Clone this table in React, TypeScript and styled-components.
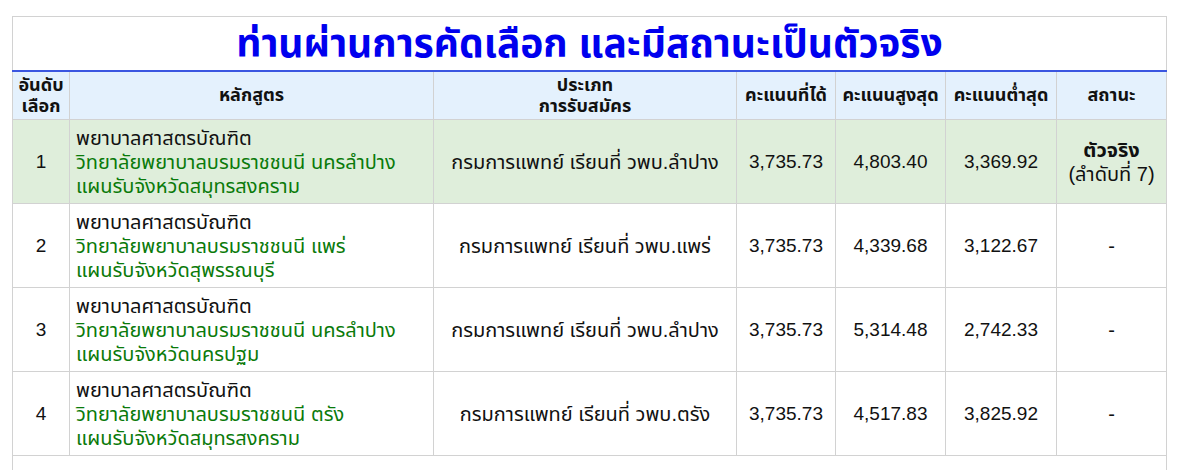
import React from "react";
import styled, { createGlobalStyle } from "styled-components";

const Global = createGlobalStyle`
  html, body { margin: 0; padding: 0; background: #fff; }
  body { font-family: "Liberation Sans", "Noto Sans Thai", "Noto Sans", sans-serif; color: #111; }
`;

const Page = styled.div`
  padding: 16px 15px 0 12px;
`;

const Table = styled.table`
  width: 1154px;
  border-collapse: collapse;
  table-layout: fixed;
  border: 1px solid #d2d2d2;
`;

const Col = styled.col<{ $w: number }>`
  width: ${(p) => p.$w}px;
`;

const TitleCell = styled.th`
  height: 53px;
  padding: 0;
  text-align: center;
  font-size: 39px;
  line-height: 40px;
  font-weight: bold;
  color: #0000ee;
  border-bottom: 2px solid #3b56e0;
`;

const HeadCell = styled.th`
  height: 47px;
  padding: 0 2px;
  background: #e4f1fd;
  border: 1px solid #d2d2d2;
  border-top: none;
  font-size: 18px;
  font-weight: bold;
  line-height: 21px;
  text-align: center;
  color: #111;
  white-space: nowrap;
`;

const Row = styled.tr<{ $active?: boolean }>`
  background: ${(p) => (p.$active ? "#dfeedb" : "#fff")};
`;

const Cell = styled.td<{ $align?: "left" | "center"; $num?: boolean }>`
  height: 83px;
  padding: 0 ${(p) => (p.$align === "left" ? "6px" : "2px")};
  border: 1px solid #d2d2d2;
  font-size: ${(p) => (p.$num ? "19px" : "20px")};
  line-height: 24px;
  text-align: ${(p) => p.$align ?? "center"};
  vertical-align: middle;
  color: #111;
  white-space: nowrap;
`;

const Green = styled.div`
  color: #0a7a0a;
`;

const Status = styled.div`
  font-weight: bold;
`;

const FooterCell = styled.td`
  height: 30px;
  border: 1px solid #d2d2d2;
`;

type Item = {
  n: number;
  college: string;
  plan: string;
  type: string;
  score: string;
  max: string;
  min: string;
  active?: boolean;
};

const items: Item[] = [
  { n: 1, college: "วิทยาลัยพยาบาลบรมราชชนนี นครลำปาง", plan: "แผนรับจังหวัดสมุทรสงคราม", type: "กรมการแพทย์ เรียนที่ วพบ.ลำปาง", score: "3,735.73", max: "4,803.40", min: "3,369.92", active: true },
  { n: 2, college: "วิทยาลัยพยาบาลบรมราชชนนี แพร่", plan: "แผนรับจังหวัดสุพรรณบุรี", type: "กรมการแพทย์ เรียนที่ วพบ.แพร่", score: "3,735.73", max: "4,339.68", min: "3,122.67" },
  { n: 3, college: "วิทยาลัยพยาบาลบรมราชชนนี นครลำปาง", plan: "แผนรับจังหวัดนครปฐม", type: "กรมการแพทย์ เรียนที่ วพบ.ลำปาง", score: "3,735.73", max: "5,314.48", min: "2,742.33" },
  { n: 4, college: "วิทยาลัยพยาบาลบรมราชชนนี ตรัง", plan: "แผนรับจังหวัดสมุทรสงคราม", type: "กรมการแพทย์ เรียนที่ วพบ.ตรัง", score: "3,735.73", max: "4,517.83", min: "3,825.92" },
];

export default function App() {
  return (
    <>
      <Global />
      <Page>
        <Table>
          <colgroup>
            <Col $w={57} />
            <Col $w={364} />
            <Col $w={303} />
            <Col $w={99} />
            <Col $w={110} />
            <Col $w={111} />
            <Col $w={110} />
          </colgroup>
          <thead>
            <tr>
              <TitleCell colSpan={7}>ท่านผ่านการคัดเลือก และมีสถานะเป็นตัวจริง</TitleCell>
            </tr>
            <tr>
              <HeadCell>อันดับ<br />เลือก</HeadCell>
              <HeadCell>หลักสูตร</HeadCell>
              <HeadCell>ประเภท<br />การรับสมัคร</HeadCell>
              <HeadCell>คะแนนที่ได้</HeadCell>
              <HeadCell>คะแนนสูงสุด</HeadCell>
              <HeadCell>คะแนนต่ำสุด</HeadCell>
              <HeadCell>สถานะ</HeadCell>
            </tr>
          </thead>
          <tbody>
            {items.map((it) => (
              <Row key={it.n} $active={it.active}>
                <Cell $num>{it.n}</Cell>
                <Cell $align="left">
                  พยาบาลศาสตรบัณฑิต
                  <Green>{it.college}</Green>
                  <Green>{it.plan}</Green>
                </Cell>
                <Cell>{it.type}</Cell>
                <Cell $num>{it.score}</Cell>
                <Cell $num>{it.max}</Cell>
                <Cell $num>{it.min}</Cell>
                <Cell>
                  {it.active ? (
                    <>
                      <Status>ตัวจริง</Status>
                      (ลำดับที่ 7)
                    </>
                  ) : (
                    "-"
                  )}
                </Cell>
              </Row>
            ))}
            <tr>
              <FooterCell colSpan={7} />
            </tr>
          </tbody>
        </Table>
      </Page>
    </>
  );
}
